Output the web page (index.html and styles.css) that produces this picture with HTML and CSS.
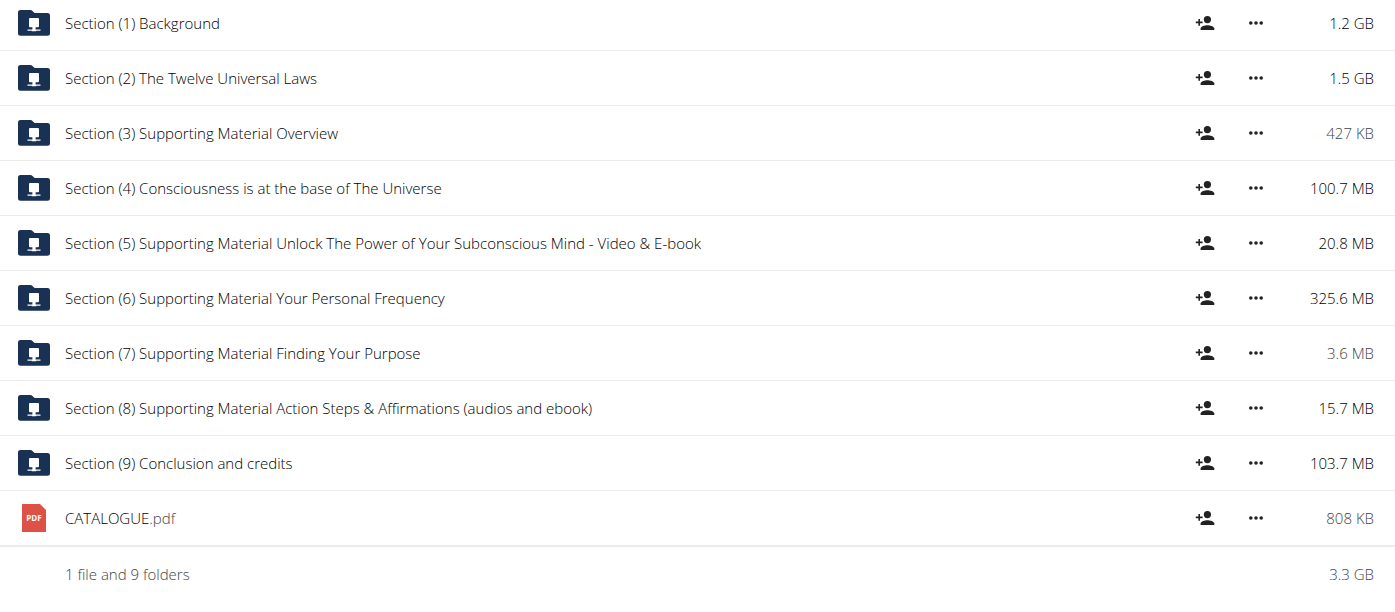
FILE: index.html
```html
<!DOCTYPE html>
<html lang="en">
<head>
  <meta charset="UTF-8" />
  <meta name="viewport" content="width=device-width, initial-scale=1" />
  <title>Files</title>
  <link rel="stylesheet" href="styles.css">
</head>
<body>
  <!-- Shared icons -->
  <svg class="sprite" aria-hidden="true">
    <symbol id="icon-folder" viewBox="0 0 32 26">
      <path fill="#193153" d="M2.5 0H12.5Q13.5 0 14.2 0.7L16.6 3H29.5Q32 3 32 5.5V23.3Q32 25.8 29.5 25.8H2.5Q0 25.8 0 23.3V2.5Q0 0 2.5 0Z" />
      <path fill="#fff" d="M12 8H20Q21 8 21 9V16.3Q21 17.3 20 17.3H17.6V19.4H22.5V20.8H18.2V21.3H13.8V20.8H9.5V19.4H14.4V17.3H12Q11 17.3 11 16.3V9Q11 8 12 8Z" />
    </symbol>
    <symbol id="icon-pdf" viewBox="0 0 24 28">
      <path fill="#de5147" d="M0.5 0H18L24 6V27.5Q24 28 23.5 28H0.5Q0 28 0 27.5V0.5Q0 0 0.5 0Z" />
      <text x="12" y="17" text-anchor="middle" class="pdf-label">PDF</text>
    </symbol>
    <symbol id="icon-share" viewBox="0 0 20 16">
      <circle cx="12.4" cy="4.6" r="3.6" />
      <path d="M5.6 15V13.6C5.6 11.3 10 10.2 12.4 10.2S19.3 11.3 19.3 13.6V15Z" />
      <path d="M3.4 4H5V6.6H7.6V8.2H5V10.8H3.4V8.2H0.8V6.6H3.4Z" />
    </symbol>
    <symbol id="icon-more" viewBox="0 0 16 16">
      <circle cx="2.8" cy="8" r="1.8" />
      <circle cx="8" cy="8" r="1.8" />
      <circle cx="13.2" cy="8" r="1.8" />
    </symbol>
  </svg>

  <table class="file-table">
    <tbody id="fileList">
      <!-- Rows will be rendered here -->
    </tbody>
    <tfoot>
      <tr>
        <td class="icon-cell"></td>
        <td class="name-cell">1 file and 9 folders</td>
        <td class="action-cell"></td>
        <td class="action-cell"></td>
        <td class="size-cell">3.3 GB</td>
      </tr>
    </tfoot>
  </table>

  <script>
    const files = [
      { name: 'Section (1) Background', size: '1.2 GB' },
      { name: 'Section (2) The Twelve Universal Laws', size: '1.5 GB' },
      { name: 'Section (3) Supporting Material Overview', size: '427 KB', small: true },
      { name: 'Section (4) Consciousness is at the base of The Universe', size: '100.7 MB' },
      { name: 'Section (5) Supporting Material Unlock The Power of Your Subconscious Mind - Video &amp; E-book', size: '20.8 MB' },
      { name: 'Section (6) Supporting Material Your Personal Frequency', size: '325.6 MB' },
      { name: 'Section (7) Supporting Material Finding Your Purpose', size: '3.6 MB', small: true },
      { name: 'Section (8) Supporting Material Action Steps &amp; Affirmations (audios and ebook)', size: '15.7 MB' },
      { name: 'Section (9) Conclusion and credits', size: '103.7 MB' },
      { name: 'CATALOGUE', ext: '.pdf', size: '808 KB', small: true }
    ];

    const fileList = document.getElementById('fileList');

    files.forEach(file => {
      const type = file.ext ? 'pdf' : 'folder';
      const ext = file.ext ? `<span class="ext">${file.ext}</span>` : '';
      const row = document.createElement('tr');

      row.innerHTML = `
        <td class="icon-cell"><svg class="icon-${type}" aria-hidden="true"><use href="#icon-${type}" /></svg></td>
        <td class="name-cell"><a href="#">${file.name}${ext}</a></td>
        <td class="action-cell">
          <button type="button" aria-label="Share ${file.name}"><svg class="icon-share"><use href="#icon-share" /></svg></button>
        </td>
        <td class="action-cell">
          <button type="button" aria-label="More options for ${file.name}"><svg class="icon-more"><use href="#icon-more" /></svg></button>
        </td>
        <td class="size-cell${file.small ? ' small' : ''}">${file.size}</td>
      `;

      fileList.appendChild(row);
    });
  </script>
</body>
</html>
```
FILE: styles.css
```css
* {
  box-sizing: border-box;
  margin: 0;
  padding: 0;
}

body {
  font-family: 'Open Sans', 'Noto Sans', sans-serif;
  font-size: 15px;
  font-weight: 300;
  line-height: 20px;
  background-color: #fff;
  color: #000;
  overflow: hidden;
}

.sprite {
  display: none;
}

/* File list, scrolled slightly past the first row's top edge */
.file-table {
  width: 100%;
  margin-top: -4px;
  border-collapse: separate;
  border-spacing: 0;
  table-layout: fixed;
}

.file-table td {
  height: 55px;
  border-bottom: 1px solid #ebebeb;
  vertical-align: middle;
}

.file-table tbody tr:last-child td {
  height: 56px;
  border-bottom-width: 2px;
}

.file-table tfoot td {
  height: 54px;
  border-bottom: none;
  color: #444;
}

.file-table .icon-cell {
  width: 65px;
  padding-left: 18px;
}

.name-cell {
  white-space: nowrap;
  overflow: hidden;
  text-overflow: ellipsis;
}

.name-cell a {
  color: inherit;
  text-decoration: none;
}

.name-cell a:hover {
  text-decoration: underline;
}

.ext,
.size-cell.small {
  color: #444;
}

.action-cell {
  width: 51px;
  text-align: center;
}

.file-table .size-cell {
  width: 114px;
  padding-right: 21px;
  text-align: right;
  white-space: nowrap;
}

/* Buttons and icons */
button {
  width: 32px;
  height: 32px;
  border: none;
  background: none;
  cursor: pointer;
  vertical-align: middle;
}

svg {
  display: block;
}

.icon-folder {
  width: 32px;
  height: 26px;
}

.icon-pdf {
  width: 24px;
  height: 28px;
  margin-left: 4px;
}

.pdf-label {
  font-family: 'Open Sans', sans-serif;
  font-size: 8px;
  font-weight: 700;
  fill: #fff;
}

.icon-share,
.icon-more {
  height: 16px;
  margin: 0 auto;
  fill: #222;
}

.icon-share {
  width: 20px;
}

.icon-more {
  width: 16px;
}
```
